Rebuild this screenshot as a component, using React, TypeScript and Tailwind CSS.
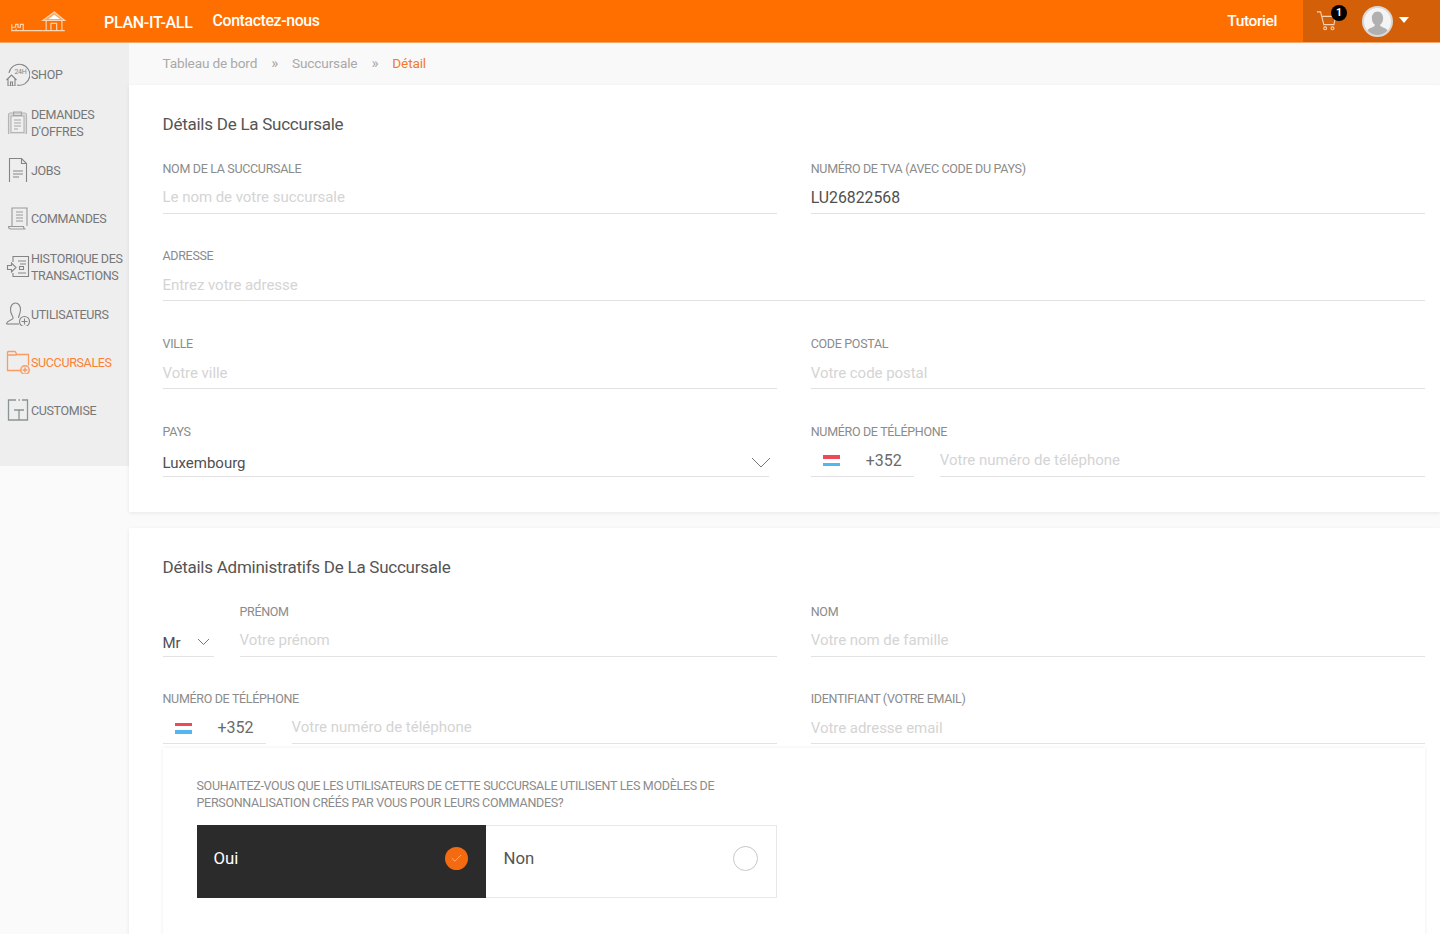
import { Check } from 'lucide-react';

const nav = [
  { label: ['SHOP'], icon: 'shop' },
  { label: ['DEMANDES', "D'OFFRES"], icon: 'offers' },
  { label: ['JOBS'], icon: 'jobs' },
  { label: ['COMMANDES'], icon: 'orders' },
  { label: ['HISTORIQUE DES', 'TRANSACTIONS'], icon: 'history' },
  { label: ['UTILISATEURS'], icon: 'users' },
  { label: ['SUCCURSALES'], icon: 'branches', active: true },
  { label: ['CUSTOMISE'], icon: 'customise' },
];

function NavIcon({ name }: { name: string }) {
  const cls = name === 'branches' ? 'text-[#fb9a63]' : 'text-[#858585]';
  return (
    <svg viewBox="0 0 24 24" className={`w-[24px] h-[24px] shrink-0 ${cls}`} fill="none" stroke="currentColor" strokeWidth="1.1">
      {name === 'shop' && (
        <>
          <path d="M3 11a10.500 10.500 0 1 1 8 12" />
          <text x="8.500" y="11.500" fontSize="7" fill="currentColor" stroke="none" fontFamily="Roboto, sans-serif">24H</text>
          <path d="M0.500 18l5-5 5 5M2 16.500V24h7v-7.500M4.500 24v-4h2v4" />
        </>
      )}
      {name === 'offers' && (
        <>
          <rect x="2.500" y="3" width="18" height="22" rx="2" fill="#dcdcdc" stroke="#b5b5b5" />
          <rect x="5" y="6" width="13" height="16.500" fill="#efefef" stroke="#b5b5b5" />
          <path d="M7.500 2h8v3.500h-8zM8 10h7M8 13h7M8 16h7M8 19h4" stroke="#a5a5a5" />
        </>
      )}
      {name === 'jobs' && (
        <>
          <path d="M3.500 0.500h12l5 5v19h-17zM15.500 0.500v5h5" />
          <path d="M7 13h10M7 16h10M7 19h6" />
        </>
      )}
      {name === 'orders' && (
        <>
          <path d="M6 20V2h15v18M2.500 20.500h15c0 1.200.5 2.500 2 2.500H5c-1.500 0-2.500-1-2.500-2.500z" stroke="#999" />
          <path d="M10 6h7M10 9h7M10 12h7M10 15h7" stroke="#999" />
        </>
      )}
      {name === 'history' && (
        <>
          <path d="M7 8V2.500h15.500V22.500H7v-3.500" />
          <path d="M12 7h8M14 10h6M1.500 11.500h4V9l4.500 4.500L5.500 18v-2.500h-4zM13.500 12.500h4v3h-4zM12 19h8" />
        </>
      )}
      {name === 'users' && (
        <>
          <path d="M0.500 22c0-3.500 5-3.500 6.500-5.500.5-2.500-2.500-3.500-2.500-9 0-3.500 2-6.500 5-6.500s5 3 5 6.500c0 4-2 6.500-2 8.500" />
          <path d="M0.500 22h12.500" />
          <circle cx="18.500" cy="19.500" r="5" />
          <path d="M18.500 16.500v6M15.500 19.500h6" />
        </>
      )}
      {name === 'branches' && (
        <>
          <path d="M15 20.500H1.500V2.500a1 1 0 0 1 1-1H9l2 3h11.500v11M1.500 5h9" strokeWidth="1.300" />
          <circle cx="19" cy="20" r="4.200" fill="#eeeeee" strokeWidth="1.500" />
          <path d="M19 17.500v5M16.500 20h5" strokeWidth="1.500" />
        </>
      )}
      {name === 'customise' && (
        <>
          <path d="M10 2H2.500v20h19V2H16M12.500 2h1.500M21.500 9v3" stroke="#8a9494" strokeWidth="1.300" />
          <path d="M8 12h10M13 12v10" stroke="#8a9494" strokeWidth="1.300" />
        </>
      )}
    </svg>
  );
}

function Flag() {
  return (
    <span className="flex flex-col w-[17px] h-[11px] shrink-0">
      <span className="h-1/3 bg-[#ed4a58]" />
      <span className="h-1/3 bg-white" />
      <span className="h-1/3 bg-[#53b6ec]" />
    </span>
  );
}

function Label({ children }: { children: React.ReactNode }) {
  return <div className="h-[17px] text-[12.5px] leading-[17px] tracking-[-0.32px] text-[#8b8b8b] whitespace-nowrap">{children}</div>;
}

function Value({ text, filled = false }: { text: string; filled?: boolean }) {
  return (
    <div className={`mt-[10.5px] h-[26.5px] border-b border-[#e2e2e2] whitespace-nowrap ${filled ? 'leading-[22px] text-[15.8px] text-[#4f4f4f]' : 'leading-[20px] text-[15px] tracking-[-0.04px] text-[#d4d4d4]'}`}>
      {text}
    </div>
  );
}

function Field({ label, value, filled }: { label: string; value: string; filled?: boolean }) {
  return (
    <div className="min-w-0 h-[54px]">
      <Label>{label}</Label>
      <Value text={value} filled={filled} />
    </div>
  );
}

function Phone({ label }: { label: string }) {
  return (
    <div className="min-w-0 h-[54px]">
      <Label>{label}</Label>
      <div className="flex gap-[26px] mt-[10px]">
        <div className="w-[103px] shrink-0 h-[27px] pb-[4px] flex items-center border-b border-[#e2e2e2] pl-[12px] text-[16px] text-[#6a6a6a]">
          <Flag />
          <span className="ml-[26px]">+352</span>
        </div>
        <div className="flex-1 h-[27px] border-b border-[#e2e2e2] text-[15px] leading-[20px] text-[#d4d4d4] whitespace-nowrap">
          Votre numéro de téléphone
        </div>
      </div>
    </div>
  );
}

export default function App() {
  return (
    <div className="w-[1440px] h-[934px] overflow-hidden bg-[#fafafa] font-['Roboto',sans-serif]">
      {/* Header */}
      <header className="h-[43px] bg-[#ff6f00] border-b border-[#f9a566] flex items-center text-white">
        <svg viewBox="0 0 60 22" className="w-[58px] h-[21px] ml-[10px] mt-[1px] text-[#fcd5b5]" fill="none" stroke="currentColor" strokeWidth="1.200">
          <path d="M1.500 14v6.500h12V14h-3v3H8v-3H5.500v3h-4M14 20.500h20M6 20.500v-2" />
          <path d="M34 20.500h23M37.500 20V9.500M54 20V9.500M42.500 20v-7h6v7" />
          <path d="M34 10L46 1l11 9z" fill="currentColor" fillOpacity="0.55" />
          <path d="M40 8.500L46 4l6 4.500z" fill="#fff" stroke="none" />
        </svg>
        <span className="ml-[36px] mt-[3px] text-[16px] font-medium tracking-[-0.3px]">PLAN-IT-ALL</span>
        <span className="ml-[20px] mt-[-1px] text-[15.800px] font-medium tracking-[-0.35px]">Contactez-nous</span>
        <span className="ml-auto mr-[26px] mt-[1px] text-[15.500px] font-medium tracking-[-0.4px]">Tutoriel</span>
        <div className="w-[137px] h-full bg-[#d35f09] flex items-center relative">
          <svg viewBox="0 0 24 24" className="w-[22px] h-[22px] ml-[13px] text-[#fbd3b2]" fill="none" stroke="currentColor" strokeWidth="1.200">
            <path d="M1 2h4l3.500 14h11l2-9H6.500" />
            <circle cx="10" cy="20" r="1.600" />
            <circle cx="18" cy="20" r="1.600" />
          </svg>
          <span className="absolute left-[28px] top-[5px] w-[16px] h-[16px] rounded-full bg-black text-[10.500px] font-bold flex items-center justify-center">1</span>
          <span className="ml-[24px] w-[31px] h-[31px] rounded-full bg-[#f4f4f4] border-2 border-[#d8d8d8] overflow-hidden flex items-center justify-center">
            <svg viewBox="0 0 24 24" className="w-[27px] h-[27px]" fill="#b0b0b0">
              <path d="M12 3c3 0 5 2.500 5 6 0 2.500-1 4.500-2.500 5.500v1.500c2 1.500 7 2 7 6v2H2.500v-2c0-4 5-4.500 7-6v-1.500C8 13.500 7 11.500 7 9c0-3.500 2-6 5-6z" />
            </svg>
          </span>
          <span className="ml-[6px] mt-[-2px] w-0 h-0 border-l-[5.500px] border-r-[5.500px] border-t-[6px] border-l-transparent border-r-transparent border-t-white" />
        </div>
      </header>

      <div className="flex">
        {/* Sidebar */}
        <aside className="w-[128.5px] h-[423px] shrink-0 bg-[#eeeeee] pt-[7px]">
          {nav.map((item) => (
            <div key={item.icon} className={`h-[48px] flex items-center pl-[6px] gap-[1px] text-[12.5px] leading-[17px] tracking-[-0.35px] ${item.active ? 'text-[#fb8035]' : 'text-[#777777]'}`}>
              <NavIcon name={item.icon} />
              <div className={`whitespace-nowrap ${item.label.length > 1 ? 'mt-[2px]' : ''}`}>
                {item.label.map((l) => (
                  <div key={l}>{l}</div>
                ))}
              </div>
            </div>
          ))}
        </aside>

        {/* Main */}
        <main className="flex-1 min-w-0">
          <div className="h-[42px] bg-[#f9f9f9] pl-[34px] flex items-center pb-[2px] text-[13.600px] tracking-[-0.15px] text-[#a9a9a9]">
            <span>Tableau de bord</span>
            <span className="mx-[14px] text-[15px]">»</span>
            <span>Succursale</span>
            <span className="mx-[14px] text-[15px]">»</span>
            <span className="text-[#f2792c]">Détail</span>
          </div>

          <section className="h-[427px] bg-white pl-[34px] pr-[15px] pt-[28px] shadow-[0_1px_4px_rgba(0,0,0,0.08)]">
            <h2 className="text-[17px] leading-[22px] tracking-[-0.25px] text-[#555555]">Détails De La Succursale</h2>
            <div className="grid grid-cols-2 gap-x-[34px] gap-y-[33.75px] mt-[24.5px]">
              <Field label="NOM DE LA SUCCURSALE" value="Le nom de votre succursale" />
              <Field label="NUMÉRO DE TVA (AVEC CODE DU PAYS)" value="LU26822568" filled />
              <div className="col-span-2">
                <Field label="ADRESSE" value="Entrez votre adresse" />
              </div>
              <Field label="VILLE" value="Votre ville" />
              <Field label="CODE POSTAL" value="Votre code postal" />
              <div className="min-w-0 h-[54px]">
                <Label>PAYS</Label>
                <div className="mt-[11px] mr-[8px] h-[26px] flex items-start justify-between border-b border-[#e2e2e2] text-[15px] leading-[20px] text-[#4f4f4f]">
                  <span className="mt-[2px]">Luxembourg</span>
                  <svg viewBox="0 0 20 11" className="w-[20px] h-[11px] mt-[6px] mr-[-2px] text-[#777777]" fill="none" stroke="currentColor" strokeWidth="1">
                    <path d="M1 1l9 9 9-9" />
                  </svg>
                </div>
              </div>
              <Phone label="NUMÉRO DE TÉLÉPHONE" />
            </div>
          </section>

          <section className="mt-[16px] h-[500px] bg-white pl-[34px] pr-[15px] pt-[28px] shadow-[0_1px_4px_rgba(0,0,0,0.08)]">
            <h2 className="text-[17px] leading-[22px] tracking-[-0.25px] text-[#555555]">Détails Administratifs De La Succursale</h2>
            <div className="grid grid-cols-2 gap-x-[34px] gap-y-[33.75px] mt-[24.5px]">
              <div className="flex gap-[26px] min-w-0">
                <div className="w-[51px] h-[54px] shrink-0 pt-[28px]">
                  <div className="h-[26px] flex items-start justify-between border-b border-[#e2e2e2] text-[15px] leading-[20px] text-[#4f4f4f]">
                    <span className="mt-[2px]">Mr</span>
                    <svg viewBox="0 0 13 8" className="w-[13px] h-[8px] mt-[7px] mr-[4px] text-[#777777]" fill="none" stroke="currentColor" strokeWidth="1">
                      <path d="M1 1l5.500 5.500L12 1" />
                    </svg>
                  </div>
                </div>
                <div className="flex-1 min-w-0">
                  <Field label="PRÉNOM" value="Votre prénom" />
                </div>
              </div>
              <Field label="NOM" value="Votre nom de famille" />
              <Phone label="NUMÉRO DE TÉLÉPHONE" />
              <Field label="IDENTIFIANT (VOTRE EMAIL)" value="Votre adresse email" />
            </div>

            <div className="h-[300px] mt-[3.75px] bg-white pl-[34px] pt-[29px] shadow-[0_0_4px_rgba(0,0,0,0.08)]">
              <p className="w-[580px] text-[12.500px] leading-[17px] tracking-[-0.3px] text-[#8b8b8b]">
                SOUHAITEZ-VOUS QUE LES UTILISATEURS DE CETTE SUCCURSALE UTILISENT LES MODÈLES DE PERSONNALISATION CRÉÉS PAR VOUS POUR LEURS COMMANDES?
              </p>
              <div className="w-[580px] h-[73px] mt-[13.5px] flex text-[16.800px]">
                <div className="w-[289px] bg-[#2b2b2b] text-white flex items-center justify-between pl-[17px] pr-[18px]">
                  <span className="mt-[-5px]">Oui</span>
                  <span className="mt-[-5px] w-[23px] h-[23px] rounded-full bg-[#f36a10] flex items-center justify-center">
                    <Check className="w-[13px] h-[13px] text-[#ffd9bf]" strokeWidth={1.200} />
                  </span>
                </div>
                <div className="flex-1 border border-l-0 border-[#e8e8e8] text-[#555555] flex items-center justify-between pl-[18px] pr-[18px]">
                  <span className="mt-[-5px]">Non</span>
                  <span className="mt-[-5px] w-[25px] h-[25px] rounded-full border-[1.5px] border-[#c8c8c8]" />
                </div>
              </div>
            </div>
          </section>
        </main>
      </div>
    </div>
  );
}
